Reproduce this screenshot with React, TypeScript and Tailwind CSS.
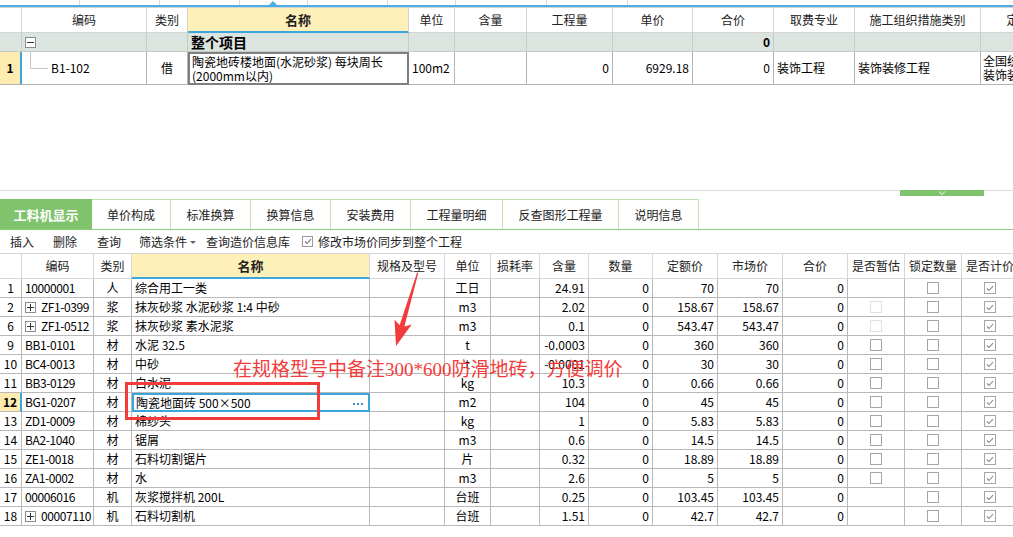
import React from 'react';

type Align = 'l' | 'c' | 'r';

interface CellProps {
  w: string;
  align?: Align;
  className?: string;
  children?: React.ReactNode;
}

function Cell({ w, align = 'l', className = '', children }: CellProps): JSX.Element {
  const justify = align === 'c' ? 'justify-center' : align === 'r' ? 'justify-end pr-[3px]' : 'justify-start pl-[3px]';
  return (
    <div className={`${w} flex-none flex items-center overflow-hidden whitespace-nowrap border-r border-b ${justify} ${className}`}>
      {children}
    </div>
  );
}

function TreeBox({ plus }: { plus?: boolean }): JSX.Element {
  return (
    <span className="relative inline-block flex-none w-[11px] h-[11px] border border-[#8c8c8c] bg-white">
      <span className="absolute left-[1px] top-[4px] w-[7px] h-px bg-[#333]" />
      {plus && <span className="absolute left-[4px] top-[1px] w-px h-[7px] bg-[#333]" />}
    </span>
  );
}

type CheckState = 'none' | 'dim' | 'off' | 'on';

function Check({ state }: { state: CheckState }): JSX.Element | null {
  if (state === 'none') return null;
  return (
    <span
      className={`flex-none flex items-center justify-center w-[12px] h-[12px] border bg-white ${
        state === 'dim' ? 'border-[#e0e0e0]' : 'border-[#a6a6a6]'
      }`}
    >
      {state === 'on' && (
        <svg width="8" height="7" viewBox="0 0 8 7">
          <path d="M1 3.5 L3 5.5 L7 1.2" fill="none" stroke="#8c8c8c" strokeWidth="1.1" />
        </svg>
      )}
    </span>
  );
}

interface MatRow {
  no: string;
  code: string;
  box?: boolean;
  type: string;
  name: string;
  unit: string;
  amount: string;
  qty: string;
  price: string;
  market: string;
  total: string;
  zg: CheckState;
  selected?: boolean;
}

const rows: MatRow[] = [
  { no: '1', code: '10000001', type: '人', name: '综合用工一类', unit: '工日', amount: '24.91', qty: '0', price: '70', market: '70', total: '0', zg: 'none' },
  { no: '2', code: 'ZF1-0399', box: true, type: '浆', name: '抹灰砂浆 水泥砂浆 1:4 中砂', unit: 'm3', amount: '2.02', qty: '0', price: '158.67', market: '158.67', total: '0', zg: 'dim' },
  { no: '6', code: 'ZF1-0512', box: true, type: '浆', name: '抹灰砂浆 素水泥浆', unit: 'm3', amount: '0.1', qty: '0', price: '543.47', market: '543.47', total: '0', zg: 'dim' },
  { no: '9', code: 'BB1-0101', type: '材', name: '水泥 32.5', unit: 't', amount: '-0.0003', qty: '0', price: '360', market: '360', total: '0', zg: 'off' },
  { no: '10', code: 'BC4-0013', type: '材', name: '中砂', unit: 't', amount: '-0.0001', qty: '0', price: '30', market: '30', total: '0', zg: 'off' },
  { no: '11', code: 'BB3-0129', type: '材', name: '白水泥', unit: 'kg', amount: '10.3', qty: '0', price: '0.66', market: '0.66', total: '0', zg: 'off' },
  { no: '12', code: 'BG1-0207', type: '材', name: '陶瓷地面砖 500×500', unit: 'm2', amount: '104', qty: '0', price: '45', market: '45', total: '0', zg: 'off', selected: true },
  { no: '13', code: 'ZD1-0009', type: '材', name: '棉纱头', unit: 'kg', amount: '1', qty: '0', price: '5.83', market: '5.83', total: '0', zg: 'off' },
  { no: '14', code: 'BA2-1040', type: '材', name: '锯屑', unit: 'm3', amount: '0.6', qty: '0', price: '14.5', market: '14.5', total: '0', zg: 'off' },
  { no: '15', code: 'ZE1-0018', type: '材', name: '石料切割锯片', unit: '片', amount: '0.32', qty: '0', price: '18.89', market: '18.89', total: '0', zg: 'off' },
  { no: '16', code: 'ZA1-0002', type: '材', name: '水', unit: 'm3', amount: '2.6', qty: '0', price: '5', market: '5', total: '0', zg: 'off' },
  { no: '17', code: '00006016', type: '机', name: '灰浆搅拌机 200L', unit: '台班', amount: '0.25', qty: '0', price: '103.45', market: '103.45', total: '0', zg: 'none' },
  { no: '18', code: '00007110', box: true, type: '机', name: '石料切割机', unit: '台班', amount: '1.51', qty: '0', price: '42.7', market: '42.7', total: '0', zg: 'none' },
];

const tabs = ['单价构成', '标准换算', '换算信息', '安装费用', '工程量明细', '反查图形工程量', '说明信息'];
const tabWidths = ['w-[79px]', 'w-[80px]', 'w-[80px]', 'w-[80px]', 'w-[92px]', 'w-[116px]', 'w-[80px]'];

function TopGrid(): JSX.Element {
  const hb = 'border-[#d4d4d4]';
  const gb = 'border-[#c4ccc8]';
  const bb = 'border-[#b4b4b4]';
  return (
    <div className="flex flex-col">
      <div className="relative flex h-[5px]">
        {['w-[80px]', 'w-[80px]', 'w-[80px]', 'w-[68px]', 'w-[80px]', 'w-[68px]', 'w-[91px]', 'w-[81px]'].map((w, i) => (
          <div key={i} className={`${w} flex-none border-r border-[#dadada]`} />
        ))}
        <span className="absolute left-[269px] top-[1px] w-0 h-0 border-l-[4px] border-r-[4px] border-b-[4px] border-l-transparent border-r-transparent border-b-[#4aaee0]" />
      </div>
      <div className="h-[2px] bg-[#4aaee0]" />
      <div className="flex h-[26px] border-t border-[#d4d4d4] text-[12px] text-[#222]">
        <Cell w="w-[22px]" className={hb} />
        <Cell w="w-[125px]" align="c" className={hb}>编码</Cell>
        <Cell w="w-[41px]" align="c" className={hb}>类别</Cell>
        <Cell w="w-[221px]" align="c" className="bg-[#ffefb8] border-r-[#d4d4d4] border-b-2 border-b-[#3aa6db] font-bold text-[13px]">名称</Cell>
        <Cell w="w-[46px]" align="c" className={hb}>单位</Cell>
        <Cell w="w-[72px]" align="c" className={hb}>含量</Cell>
        <Cell w="w-[86px]" align="c" className={hb}>工程量</Cell>
        <Cell w="w-[80px]" align="c" className={hb}>单价</Cell>
        <Cell w="w-[81px]" align="c" className={hb}>合价</Cell>
        <Cell w="w-[81px]" align="c" className={hb}>取费专业</Cell>
        <Cell w="w-[126px]" align="c" className={hb}>施工组织措施类别</Cell>
        <Cell w="w-[100px]" align="c" className={hb}>定额名称</Cell>
      </div>
      <div className="flex h-[19px] bg-[#dce4df] text-[12px]">
        <Cell w="w-[22px]" className={gb} />
        <Cell w="w-[125px]" className={gb}>
          <TreeBox />
        </Cell>
        <Cell w="w-[41px]" className={gb} />
        <Cell w="w-[221px]" className={`${gb} font-bold text-[14px]`}>整个项目</Cell>
        <Cell w="w-[46px]" className={gb} />
        <Cell w="w-[72px]" className={gb} />
        <Cell w="w-[86px]" className={gb} />
        <Cell w="w-[80px]" className={gb} />
        <Cell w="w-[81px]" align="r" className={`${gb} font-bold`}>0</Cell>
        <Cell w="w-[81px]" className={gb} />
        <Cell w="w-[126px]" className={gb} />
        <Cell w="w-[100px]" className={gb} />
      </div>
      <div className="flex h-[33px] text-[12px] text-black">
        <Cell w="w-[22px]" align="c" className="bg-[#fdebb0] font-bold border-b-[#b4b4b4] border-r-2 border-r-[#3aa6db]">1</Cell>
        <div className={`w-[125px] flex-none flex items-start border-r border-b ${bb}`}>
          <span className="ml-[8px] w-[18px] h-[17px] flex-none border-l border-b border-[#c4c4c4]" />
          <span className="self-center ml-[3px]">B1-102</span>
        </div>
        <Cell w="w-[41px]" align="c" className={bb}>借</Cell>
        <div className="w-[221px] flex-none flex flex-col justify-center pl-[2px] border-2 border-[#7f7f7f] leading-[14px] whitespace-nowrap overflow-hidden">
          <span>陶瓷地砖楼地面(水泥砂浆) 每块周长</span>
          <span>(2000mm以内)</span>
        </div>
        <Cell w="w-[46px]" className={bb}>100m2</Cell>
        <Cell w="w-[72px]" className={bb} />
        <Cell w="w-[86px]" align="r" className={bb}>0</Cell>
        <Cell w="w-[80px]" align="r" className={bb}>6929.18</Cell>
        <Cell w="w-[81px]" align="r" className={bb}>0</Cell>
        <Cell w="w-[81px]" className={bb}>装饰工程</Cell>
        <Cell w="w-[126px]" className={bb}>装饰装修工程</Cell>
        <div className={`w-[100px] flex-none flex flex-col justify-center pl-[2px] border-r border-b leading-[14px] whitespace-nowrap overflow-hidden ${bb}`}>
          <span>全国统一装饰</span>
          <span>装饰装修工程</span>
        </div>
      </div>
    </div>
  );
}

function Toolbar(): JSX.Element {
  return (
    <div className="flex items-center h-[23px] text-[12px] text-[#222]">
      <span className="ml-[10px]">插入</span>
      <span className="ml-[19px]">删除</span>
      <span className="ml-[20px]">查询</span>
      <span className="ml-[18px] flex items-center">
        筛选条件
        <span className="ml-[3px] mt-[1px] w-0 h-0 border-l-[3px] border-r-[3px] border-t-[3px] border-l-transparent border-r-transparent border-t-[#666]" />
      </span>
      <span className="ml-[10px]">查询造价信息库</span>
      <span className="ml-[12px] flex items-center justify-center w-[11px] h-[11px] border border-[#9a9a9a] bg-white">
        <svg width="8" height="7" viewBox="0 0 8 7">
          <path d="M1 3.5 L3 5.5 L7 1.2" fill="none" stroke="#777" strokeWidth="1.1" />
        </svg>
      </span>
      <span className="ml-[5px]">修改市场价同步到整个工程</span>
    </div>
  );
}

function MaterialGrid(): JSX.Element {
  const hb = 'border-[#d6d6d6]';
  const bb = 'border-[#b9b9b9]';
  return (
    <div className="flex flex-col">
      <div className="flex h-[26px] border-t border-[#d6d6d6] text-[12px] text-[#222]">
        <Cell w="w-[22px]" className={hb} />
        <Cell w="w-[72px]" align="c" className={hb}>编码</Cell>
        <Cell w="w-[38px]" align="c" className={hb}>类别</Cell>
        <Cell w="w-[238px]" align="c" className="bg-[#ffefb8] border-r-[#d6d6d6] border-b-2 border-b-[#3aa6db] font-bold text-[13px]">名称</Cell>
        <Cell w="w-[75px]" align="c" className={hb}>规格及型号</Cell>
        <Cell w="w-[46px]" align="c" className={hb}>单位</Cell>
        <Cell w="w-[49px]" align="c" className={hb}>损耗率</Cell>
        <Cell w="w-[49px]" align="c" className={hb}>含量</Cell>
        <Cell w="w-[64px]" align="c" className={hb}>数量</Cell>
        <Cell w="w-[65px]" align="c" className={hb}>定额价</Cell>
        <Cell w="w-[65px]" align="c" className={hb}>市场价</Cell>
        <Cell w="w-[65px]" align="c" className={hb}>合价</Cell>
        <Cell w="w-[57px]" align="c" className={hb}>是否暂估</Cell>
        <Cell w="w-[57px]" align="c" className={hb}>锁定数量</Cell>
        <Cell w="w-[57px]" align="c" className={hb}>是否计价</Cell>
      </div>
      {rows.map((r) => (
        <div key={r.no} className="flex h-[19px] text-[12px] text-black">
          <Cell
            w="w-[22px]"
            align="c"
            className={r.selected ? 'bg-[#fdebb0] font-bold border-b-[#b9b9b9] border-r-2 border-r-[#3aa6db]' : bb}
          >
            {r.no}
          </Cell>
          <Cell w="w-[72px]" className={bb}>
            {r.box && <TreeBox plus />}
            <span className={`tracking-[-0.4px] ${r.box ? 'ml-[5px]' : ''}`}>{r.code}</span>
          </Cell>
          <Cell w="w-[38px]" align="c" className={bb}>{r.type}</Cell>
          {r.selected ? (
            <div className="w-[238px] flex-none flex items-center justify-between pl-[2px] pr-[5px] border-2 border-[#3aa6db] whitespace-nowrap overflow-hidden">
              <span>{r.name}</span>
              <span className="flex gap-[2px] mt-[2px]">
                <span className="w-[2px] h-[2px] bg-[#3a8fd0]" />
                <span className="w-[2px] h-[2px] bg-[#3a8fd0]" />
                <span className="w-[2px] h-[2px] bg-[#3a8fd0]" />
              </span>
            </div>
          ) : (
            <Cell w="w-[238px]" className={bb}>{r.name}</Cell>
          )}
          <Cell w="w-[75px]" className={bb} />
          <Cell w="w-[46px]" align="c" className={bb}>{r.unit}</Cell>
          <Cell w="w-[49px]" className={bb} />
          <Cell w="w-[49px]" align="r" className={bb}>{r.amount}</Cell>
          <Cell w="w-[64px]" align="r" className={bb}>{r.qty}</Cell>
          <Cell w="w-[65px]" align="r" className={bb}>{r.price}</Cell>
          <Cell w="w-[65px]" align="r" className={bb}>{r.market}</Cell>
          <Cell w="w-[65px]" align="r" className={bb}>{r.total}</Cell>
          <Cell w="w-[57px]" align="c" className={bb}>
            <Check state={r.zg} />
          </Cell>
          <Cell w="w-[57px]" align="c" className={bb}>
            <Check state="off" />
          </Cell>
          <Cell w="w-[57px]" align="c" className={bb}>
            <Check state="on" />
          </Cell>
        </div>
      ))}
    </div>
  );
}

export default function App(): JSX.Element {
  return (
    <div className="relative w-[1013px] h-[537px] overflow-hidden bg-white font-['Noto_Sans_CJK_SC',sans-serif] leading-none">
      <TopGrid />
      <div className="h-[105px]" />
      <div className="relative h-[6px] border-t border-[#dcdcdc]">
        <div className="absolute left-[900px] top-[-1px] w-[84px] h-[6px] bg-[#80c36d] flex justify-center">
          <svg width="8" height="5" viewBox="0 0 8 5" className="mt-[1px]">
            <path d="M1 0.5 L4 3.5 L7 0.5" fill="none" stroke="#ffffff" strokeWidth="1" />
          </svg>
        </div>
      </div>
      <div className="h-[3px]" />
      <div className="flex h-[31px] border-b border-[#8ccb7c]">
        <div className="w-[92px] flex-none flex items-center justify-center bg-[#80c36d] text-white font-bold text-[13px]">
          工料机显示
        </div>
        {tabs.map((t, i) => (
          <div
            key={t}
            className={`${tabWidths[i]} flex-none flex items-center justify-center border-t border-r border-[#bde3b0] text-[12px] text-[#222]`}
          >
            {t}
          </div>
        ))}
      </div>
      <Toolbar />
      <MaterialGrid />

      {/* annotation layer */}
      <div className="absolute left-[125px] top-[382px] w-[195px] h-[38px] border-[3px] border-[#f23b3b]" />
      <div className="absolute left-[233px] top-[360px] text-[19px] leading-[19px] text-[#f23c3c] whitespace-nowrap font-['Liberation_Serif','Noto_Sans_CJK_SC',serif]">
        在规格型号中备注300*600防滑地砖，方便调价
      </div>
      <svg className="absolute left-0 top-0 pointer-events-none" width="1013" height="537" viewBox="0 0 1013 537">
        <polygon
          points="417.1,272.5 418.3,272.9 404.4,326.6 411.7,324.6 396,346 394.5,319.4 399.6,325.2"
          fill="#f23b3b"
        />
      </svg>
    </div>
  );
}
